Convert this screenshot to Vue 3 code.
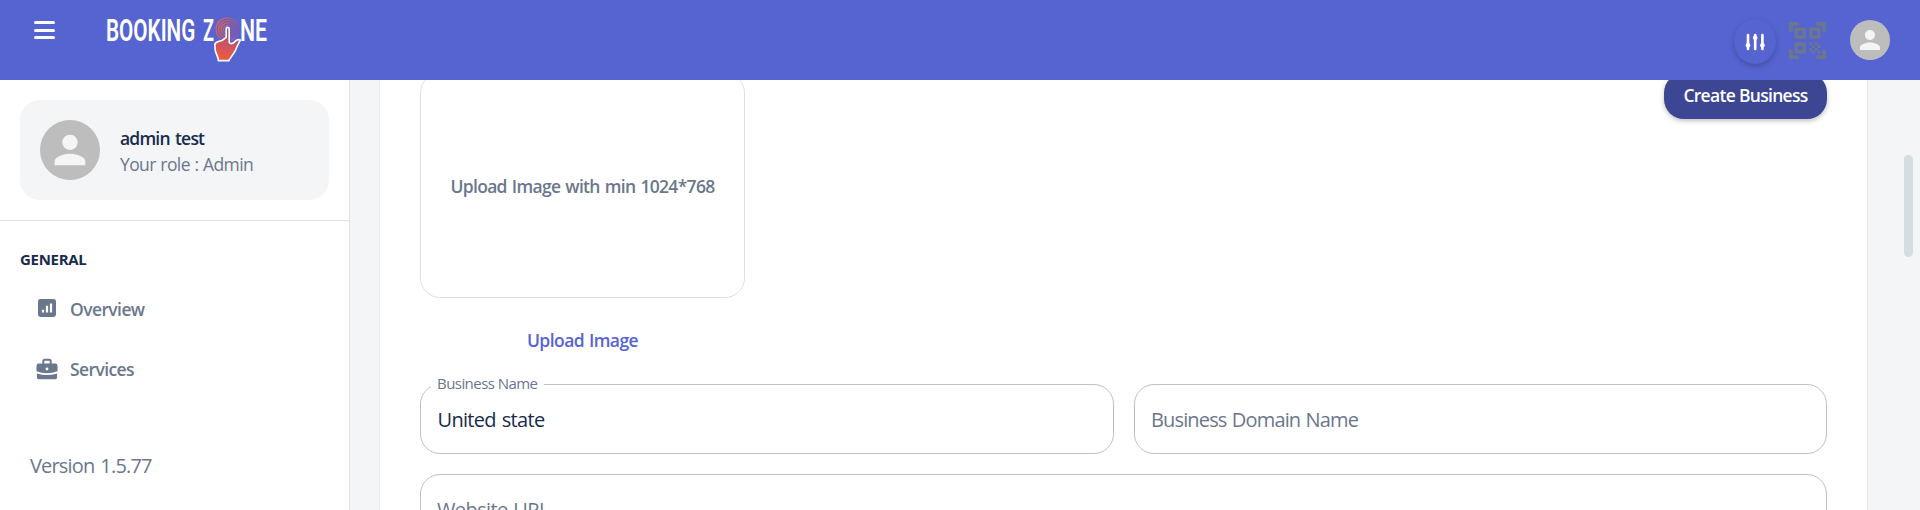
<script setup>
const person = 'M12 12c2.21 0 4-1.79 4-4s-1.79-4-4-4-4 1.79-4 4 1.79 4 4 4zm0 2c-2.67 0-8 1.34-8 4v2h16v-2c0-2.66-5.33-4-8-4z'
</script>

<template>
  <div class="page">
    <header class="topbar">
      <div class="brand-side">
        <button class="menu" aria-label="Menu"><span></span><span></span><span></span></button>
        <svg class="logo" width="170" height="58" viewBox="0 0 170 58">
          <defs>
            <linearGradient id="hand" x1="0.6" y1="0" x2="0.4" y2="1">
              <stop offset="0" stop-color="#94508f" />
              <stop offset="0.5" stop-color="#c75565" />
              <stop offset="1" stop-color="#f25a3c" />
            </linearGradient>
            <linearGradient id="rings" x1="0" y1="0.4" x2="1" y2="0.6">
              <stop offset="0" stop-color="#f0603f" />
              <stop offset="1" stop-color="#94559b" />
            </linearGradient>
          </defs>
          <g class="wordmark">
            <g transform="translate(1 33) scale(.62 1)"><text textLength="144" lengthAdjust="spacingAndGlyphs">BOOKING</text></g>
            <g transform="translate(98 33) scale(.58 1)"><text textLength="19" lengthAdjust="spacingAndGlyphs">Z</text></g>
            <g transform="translate(135 33) scale(.66 1)"><text textLength="41" lengthAdjust="spacingAndGlyphs">NE</text></g>
          </g>
          <g fill="none" stroke="url(#rings)" stroke-width="1.2">
            <circle cx="122.5" cy="21.3" r="11.4" />
            <circle cx="122.5" cy="21.3" r="8.9" />
            <circle cx="122.5" cy="21.3" r="6.4" />
            <circle cx="122.5" cy="21.3" r="4" />
          </g>
          <path
            d="M121.2 21.8q0-2.4 1.5-2.4t1.5 2.4v12.8l2 1q1.300.2 2.500-.9l3-2.700q1.800-.7 3.600.100l-3.300 6.500q-1.100 3.800-3.700 7.300l-4.100 6v.700h-11v-2l-2.900-7.700-.5-6.500q.5-1.900 4.300-3.100l2.900-.8 4.200-3.200z"
            fill="url(#hand)" stroke="#fff" stroke-width="1.6" stroke-linejoin="round"
          />
        </svg>
      </div>
      <div class="tools">
        <button class="settings" aria-label="Settings">
          <svg width="20" height="18" viewBox="0 0 20 18">
            <g stroke="#fff" stroke-width="2.6" stroke-linecap="round">
              <path d="M3 2v14M10.200 2v14M17.400 2v14" />
            </g>
            <g fill="#fff">
              <circle cx="3" cy="12.3" r="2.3" />
              <circle cx="10.2" cy="4.8" r="2.3" />
              <circle cx="17.4" cy="12.3" r="2.3" />
            </g>
          </svg>
        </button>
        <svg class="qr" width="37" height="37" viewBox="0 0 37 37">
          <g fill="none" stroke="#6b778c">
            <path stroke-width="3.8" d="M1.9 9.5V1.9H9.5M27.5 1.9H35.1V9.5M35.1 27.5V35.1H27.5M9.5 35.1H1.9V27.5" />
            <path stroke-width="3.4" d="M7.3 7.3h7.8v7.8h-7.8zM22 7.3h7.8v7.8h-7.8zM7.3 22h7.8v7.8h-7.8z" />
          </g>
          <path fill="#6b778c" d="M20.3 20.3h2.8v2.8h-2.8zM25.9 20.3h2.8v2.8h-2.8zM23.1 23.1h2.8v2.8h-2.8zM28.7 23.1h2.8v2.8h-2.8zM20.3 25.9h2.8v2.8h-2.8zM25.9 25.9h2.8v2.8h-2.8zM23.1 28.7h2.8v2.8h-2.8zM28.7 28.7h2.8v2.8h-2.8z" />
        </svg>
        <div class="avatar small">
          <svg width="30" height="30" viewBox="0 0 24 24"><path :d="person" /></svg>
        </div>
      </div>
    </header>

    <div class="body">
      <aside class="sidebar">
        <div class="profile-wrap">
          <div class="profile">
            <div class="avatar">
              <svg width="46" height="46" viewBox="0 0 24 24"><path :d="person" /></svg>
            </div>
            <div class="who">
              <div class="name">admin test</div>
              <div class="role">Your role : Admin</div>
            </div>
          </div>
        </div>
        <nav>
          <div class="section">GENERAL</div>
          <a class="item overview">
            <svg width="22" height="22" viewBox="0 0 22 22">
              <rect x="2" y="2" width="18" height="18" rx="2.4" fill="#6b778c" />
              <path d="M7 12.8v2.6M11 8.8v6.6M15 6.5v8.9" stroke="#fff" stroke-width="2.2" />
            </svg>
            <span>Overview</span>
          </a>
          <a class="item services">
            <svg width="22" height="22" viewBox="0 0 22 22">
              <path d="M7.3 6V3.4q0-1.6 1.6-1.6h4.2q1.6 0 1.6 1.6V6" fill="none" stroke="#6b778c" stroke-width="2" />
              <path d="M2.8 5.6h16.4q2.3 0 2.3 2.3v5.3Q11 17.2.5 13.2V7.9q0-2.3 2.3-2.3z" fill="#6b778c" />
              <path d="M.9 15.4Q11 18.8 21.1 15.4V19.5q0 1.7-1.7 1.7H2.6q-1.7 0-1.7-1.7z" fill="#6b778c" />
              <circle cx="11" cy="11" r="1.4" fill="#fff" />
            </svg>
            <span>Services</span>
          </a>
        </nav>
        <div class="version">Version 1.5.77</div>
      </aside>

      <main>
        <section class="card">
          <div class="upper">
            <div class="upload">
              <div class="drop">Upload Image with min 1024*768</div>
              <button class="pick">Upload Image</button>
            </div>
            <button class="create">Create Business</button>
          </div>
          <div class="fields">
            <fieldset class="field filled">
              <legend>Business Name</legend>
              <span class="value">United state</span>
            </fieldset>
            <div class="field"><span class="hint">Business Domain Name</span></div>
            <div class="field wide"><span class="hint url">Website URL</span></div>
          </div>
        </section>
        <div class="thumb"></div>
      </main>
    </div>
  </div>
</template>

<style>
html, body { overflow: hidden; }
</style>

<style scoped>
.page {
  width: 1920px;
  height: 510px;
  overflow: hidden;
  display: flex;
  flex-direction: column;
  background: #f4f5f7;
  font-family: "Open Sans", "Noto Sans", sans-serif;
  color: #172b4d;
  white-space: nowrap;
}
.page * { box-sizing: border-box; }
button { border: 0; padding: 0; background: none; font: inherit; color: inherit; }
svg { display: block; flex: none; }

.topbar {
  height: 80px;
  flex: none;
  background: #5664d2;
  display: flex;
  justify-content: space-between;
  z-index: 1;
}
.brand-side { display: flex; padding: 8px 0 0 34px; gap: 50px; }
.menu { width: 21px; height: 18px; margin-top: 13px; display: flex; flex-direction: column; justify-content: space-between; }
.menu span { height: 3px; border-radius: 2px; background: #fff; }
.wordmark { font-family: Roboto, sans-serif; font-weight: 600; font-size: 32px; fill: #fff; }
.tools { display: flex; padding: 19px 30px 0 0; }
.settings {
  width: 42px;
  height: 45px;
  border-radius: 50%;
  display: flex;
  align-items: center;
  justify-content: center;
  background: #5664d2;
  box-shadow: 0 3px 5px rgba(0, 0, 0, .15), 0 1px 7px rgba(0, 0, 0, .07);
}
.qr { margin: 3px 24px 0 13px; }
.avatar {
  width: 60px;
  height: 60px;
  border-radius: 50%;
  background: #bdbdbd;
  fill: #f4f5f7;
  display: flex;
  align-items: center;
  justify-content: center;
  flex: none;
}
.avatar.small { width: 40px; height: 40px; margin-top: 1px; }

.body { flex: 1; min-height: 0; display: flex; }
.sidebar { width: 350px; flex: none; background: #fff; border-right: 1px solid #e0e0e0; }
.profile-wrap { padding: 20px; border-bottom: 1px solid #e0e0e0; }
.profile { height: 100px; border-radius: 20px; background: #f4f5f7; padding: 0 20px; display: flex; align-items: center; gap: 20px; }
.who { padding-top: 2px; }
.name, .role { line-height: 26px; font-size: 17.5px; }
.name { font-weight: 600; letter-spacing: -.8px; word-spacing: 1.5px; }
.role { color: #6b778c; letter-spacing: -.6px; word-spacing: .6px; }
.section { margin: 28px 0 0 20px; line-height: 20px; font-size: 15px; font-weight: 700; letter-spacing: -.3px; }
.item { display: flex; align-items: center; height: 60px; padding-left: 36px; gap: 12px; color: #6b778c; font-size: 17.5px; font-weight: 600; letter-spacing: -.6px; }
.item.overview { margin-top: 10px; }
.item.overview svg { margin-top: -3px; }
.item.services svg { margin-top: -1px; }
.version { margin: 53px 0 0 30px; line-height: 28px; font-size: 20px; color: #6b778c; letter-spacing: -.82px; word-spacing: 1.5px; }

main { flex: 1; padding-left: 30px; display: flex; align-items: flex-start; }
.card {
  width: 1487px;
  height: 460px;
  margin-top: -20px;
  background: #fff;
  box-shadow: 0 0 1px rgba(0, 0, 0, .31), 0 2px 2px -2px rgba(0, 0, 0, .25);
  padding: 13px 40px 0;
}
.upper { display: flex; justify-content: space-between; align-items: flex-start; height: 311px; }
.upload { width: 325px; }
.drop { height: 225px; border: 1px solid #e0e0e0; border-radius: 20px; display: flex; align-items: center; justify-content: center; color: #6b778c; font-size: 17.5px; font-weight: 600; letter-spacing: -.68px; word-spacing: 1.1px; }
.pick { display: block; width: 100%; margin-top: 19px; height: 46px; color: #5664d2; font-size: 17.5px; font-weight: 600; letter-spacing: -.55px; word-spacing: .8px; }
.create { width: 163px; height: 46px; border-radius: 20px; background: #3c4693; color: #fff; font-size: 17.5px; font-weight: 600; letter-spacing: -.7px; padding-bottom: 2px; box-shadow: 0 2px 5px rgba(0, 0, 0, .25); }
.fields { display: grid; grid-template-columns: 694px 693px; gap: 20px; align-items: start; }
.field { height: 70px; min-width: 0; margin: 0; border: 1px solid #c1c1c1; border-radius: 20px; padding: 0 16px; font-size: 20px; display: flex; align-items: center; }
.field.wide { grid-column: 1 / -1; }
.field.filled { display: block; height: 78px; margin-top: -8px; padding: 0 10px; }
legend { height: 16px; width: 113px; padding: 0 0 0 6px; line-height: 14px; font-size: 15px; letter-spacing: -.55px; color: #6b778c; }
.value { display: block; padding: 14px 0 0 6.5px; line-height: 28px; letter-spacing: -.7px; word-spacing: 1.5px; }
.hint { color: #6b778c; letter-spacing: -.85px; word-spacing: 1px; }
.hint.url { letter-spacing: -.6px; }
.thumb { width: 9px; height: 102px; margin: 75px 0 0 37px; border-radius: 5px; background: #d6dde1; }
</style>
